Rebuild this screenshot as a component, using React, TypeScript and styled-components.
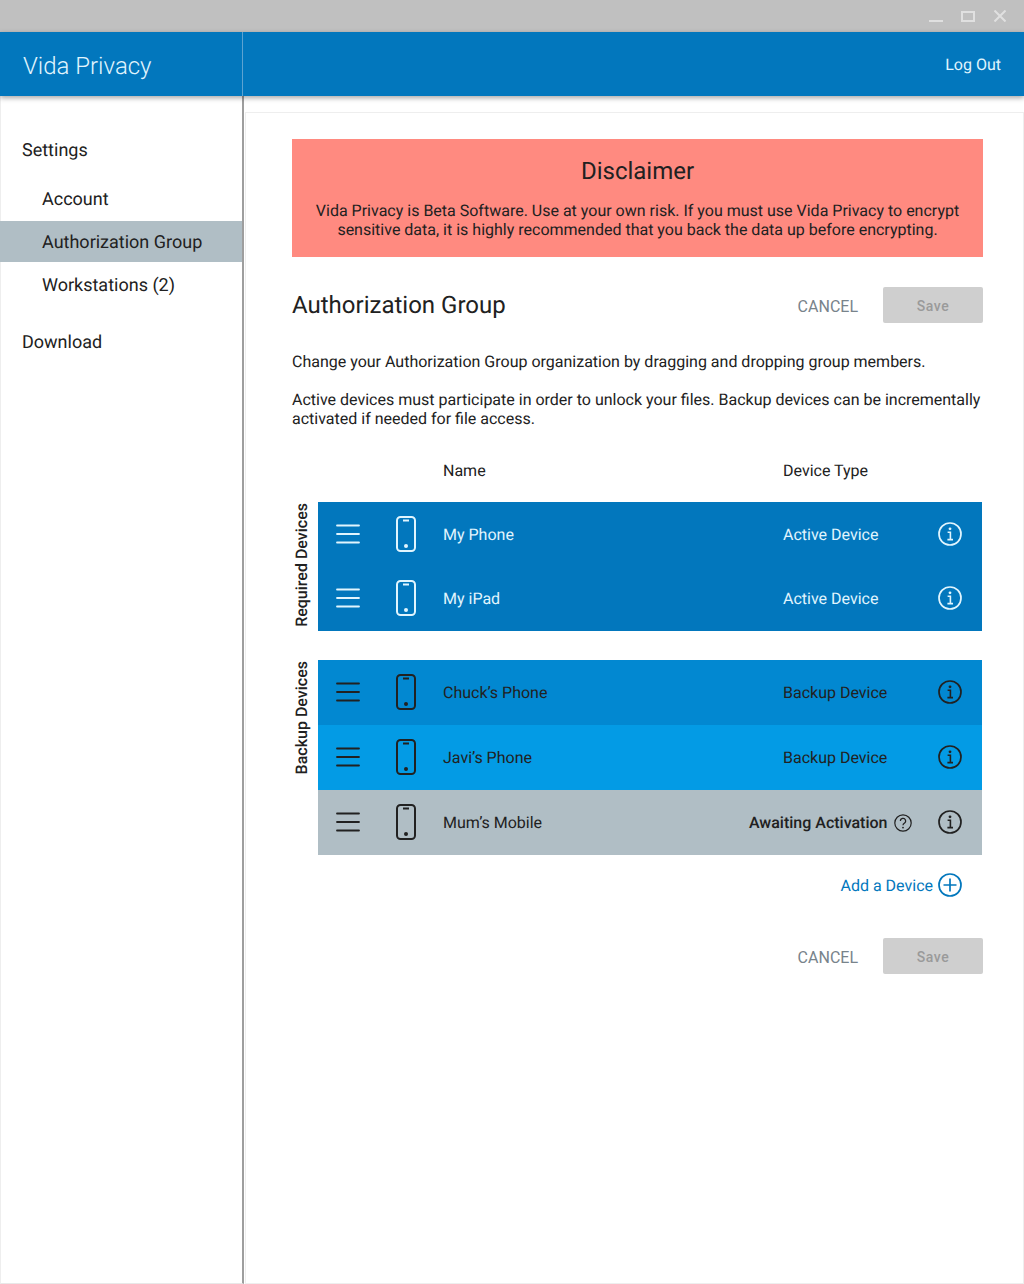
import React from 'react';
import styled, { createGlobalStyle } from 'styled-components';

const GlobalStyle = createGlobalStyle`
  html, body {
    margin: 0;
    padding: 0;
    background: #fff;
  }
  body {
    font-family: Roboto, "Liberation Sans", sans-serif;
    color: #212121;
    text-rendering: geometricPrecision;
  }
`;

type Tone = 'light' | 'dark';

const MenuIcon = () => (
  <svg width="24" height="20" viewBox="0 0 24 20" fill="none" stroke="currentColor" strokeWidth="1.8" strokeLinecap="round">
    <path d="M1 1.5h22M1 10h22M1 18.5h22" />
  </svg>
);

const PhoneIcon = () => (
  <svg width="22" height="38" viewBox="0 0 22 38" fill="none" stroke="currentColor">
    <rect x="2" y="2" width="18" height="34" rx="3.5" strokeWidth="2" />
    <path d="M8 5.5h6" strokeWidth="2" />
    <circle cx="11" cy="31" r="2" fill="currentColor" stroke="none" />
  </svg>
);

const InfoIcon = () => (
  <svg width="24" height="24" viewBox="0 0 24 24" fill="none" stroke="currentColor">
    <circle cx="12" cy="12" r="11" strokeWidth="1.7" />
    <circle cx="12" cy="6.8" r="1.4" fill="currentColor" stroke="none" />
    <path d="M9.6 10.3h2.8v7.2M9.4 17.6h5.6" strokeWidth="1.6" />
  </svg>
);

const HelpIcon = () => (
  <svg width="18" height="18" viewBox="0 0 18 18" fill="none" stroke="currentColor">
    <circle cx="9" cy="9" r="8.2" strokeWidth="1.2" />
    <path d="M6.4 7a2.6 2.6 0 1 1 3.9 2.2c-.9.5-1.3 1-1.3 2" strokeWidth="1.2" />
    <circle cx="9" cy="13.6" r=".9" fill="currentColor" stroke="none" />
  </svg>
);

const PlusIcon = () => (
  <svg width="24" height="24" viewBox="0 0 24 24" fill="none" stroke="currentColor">
    <circle cx="12" cy="12" r="11" strokeWidth="1.7" />
    <path d="M12 5.5v13M5.5 12h13" strokeWidth="1.7" />
  </svg>
);

const App = () => {
  return (
    <Page>
      <GlobalStyle />
      <TitleBar>
        <WinMin />
        <WinMax />
        <WinClose>
          <svg width="12" height="12" viewBox="0 0 12 12" stroke="currentColor" strokeWidth="2">
            <path d="M.5.5l11 11M11.5.5l-11 11" />
          </svg>
        </WinClose>
      </TitleBar>
      <Header>
        <Brand>Vida Privacy</Brand>
        <HeaderRight>
          <LogOut>Log Out</LogOut>
        </HeaderRight>
      </Header>
      <Body>
        <Sidebar>
          <NavHead>Settings</NavHead>
          <NavList>
            <NavItem>Account</NavItem>
            <NavItem $active>Authorization Group</NavItem>
            <NavItem>Workstations (2)</NavItem>
          </NavList>
          <NavDownload>Download</NavDownload>
        </Sidebar>
        <Main>
          <Card>
            <Disclaimer>
              <DisclaimerTitle>Disclaimer</DisclaimerTitle>
              <DisclaimerText>
                Vida Privacy is Beta Software. Use at your own risk. If you must use Vida Privacy to encrypt
                <br />
                sensitive data, it is highly recommended that you back the data up before encrypting.
              </DisclaimerText>
            </Disclaimer>
            <TitleRow>
              <Heading>Authorization Group</Heading>
              <Actions>
                <CancelButton>CANCEL</CancelButton>
                <SaveButton disabled>Save</SaveButton>
              </Actions>
            </TitleRow>
            <Copy>Change your Authorization Group organization by dragging and dropping group members.</Copy>
            <Copy $second>
              Active devices must participate in order to unlock your files. Backup devices can be incrementally
              activated if needed for file access.
            </Copy>
            <TableHead>
              <HeadName>Name</HeadName>
              <span>Device Type</span>
            </TableHead>
            <Group>
              <GroupLabel>Required Devices</GroupLabel>
              <Rows>
                <DeviceRow $bg="#0277bd" $tone="light" $height={64}>
                  <DeviceCells name="My Phone" type="Active Device" />
                </DeviceRow>
                <DeviceRow $bg="#0277bd" $tone="light" $height={65}>
                  <DeviceCells name="My iPad" type="Active Device" />
                </DeviceRow>
              </Rows>
            </Group>
            <BackupGroup>
              <GroupLabel>Backup Devices</GroupLabel>
              <Rows>
                <DeviceRow $bg="#0288d1" $tone="dark" $height={65}>
                  <DeviceCells name="Chuck’s Phone" type="Backup Device" />
                </DeviceRow>
                <DeviceRow $bg="#039be5" $tone="dark" $height={65}>
                  <DeviceCells name="Javi’s Phone" type="Backup Device" />
                </DeviceRow>
                <DeviceRow $bg="#b0bec5" $tone="dark" $height={65}>
                  <DeviceCells name="Mum’s Mobile" type="Awaiting Activation" awaiting />
                </DeviceRow>
              </Rows>
            </BackupGroup>
            <AddRow>
              Add a Device
              <PlusIcon />
            </AddRow>
            <BottomActions>
              <CancelButton>CANCEL</CancelButton>
              <SaveButton disabled>Save</SaveButton>
            </BottomActions>
          </Card>
        </Main>
      </Body>
    </Page>
  );
};

const DeviceCells = ({ name, type, awaiting }: { name: string; type: string; awaiting?: boolean }) => (
  <>
    <Handle>
      <MenuIcon />
    </Handle>
    <PhoneCell>
      <PhoneIcon />
    </PhoneCell>
    <NameCell>{name}</NameCell>
    {awaiting ? (
      <AwaitingCell>
        {type}
        <HelpIcon />
      </AwaitingCell>
    ) : (
      <TypeCell>{type}</TypeCell>
    )}
    <InfoCell>
      <InfoIcon />
    </InfoCell>
  </>
);

const Page = styled.div`
  width: 1024px;
  height: 1284px;
  display: flex;
  flex-direction: column;
  overflow: hidden;
`;
const TitleBar = styled.div`
  height: 32px;
  background: #c0c0c0;
  display: flex;
  align-items: center;
  justify-content: flex-end;
  color: #e0e0e0;
`;
const WinMin = styled.div`
  width: 14px;
  height: 2px;
  margin: 10px 18px 0 0;
  background: #e0e0e0;
`;
const WinMax = styled.div`
  width: 10px;
  height: 7px;
  border: 2px solid #e0e0e0;
  margin-right: 19px;
`;
const WinClose = styled.div`
  display: flex;
  margin-right: 18px;
`;
const Header = styled.header`
  height: 64px;
  display: flex;
  background: #0277bd;
  color: #fff;
  position: relative;
  z-index: 2;
  box-shadow: 0 2px 5px rgba(0, 0, 0, 0.35);
`;
const Brand = styled.div`
  width: 243px;
  box-sizing: border-box;
  padding: 4px 0 0 23px;
  display: flex;
  align-items: center;
  font-size: 24px;
  font-weight: 300;
  color: #e1f5fe;
  border-right: 1px solid #5da3d1;
`;
const HeaderRight = styled.div`
  flex: 1;
  display: flex;
  align-items: center;
  justify-content: flex-end;
  padding: 0 23px 0 0;
`;
const LogOut = styled.span`
  font-size: 16px;
  color: #e1f5fe;
`;
const Body = styled.div`
  flex: 1;
  display: flex;
  min-height: 0;
`;
const Sidebar = styled.nav`
  width: 244px;
  box-sizing: border-box;
  border-left: 1px solid #eee;
  border-right: 2px solid #9e9e9e;
  border-bottom: 1px solid #e8e8e8;
  font-size: 18px;
  padding-top: 43px;
`;
const NavHead = styled.div`
  height: 22px;
  line-height: 24px;
  padding-left: 21px;
`;
const NavList = styled.div`
  margin-top: 17px;
  display: flex;
  flex-direction: column;
  gap: 2px;
`;
const NavItem = styled.div<{ $active?: boolean }>`
  height: 41px;
  line-height: 43px;
  margin-left: -1px;
  padding-left: 42px;
  background: ${(p) => (p.$active ? '#b0bec5' : 'transparent')};
`;
const NavDownload = styled.div`
  margin-top: 26px;
  height: 22px;
  line-height: 24px;
  padding-left: 21px;
`;
const Main = styled.main`
  flex: 1;
  padding: 16px 0 0 1px;
  min-width: 0;
`;
const Card = styled.div`
  height: 100%;
  box-sizing: border-box;
  border: 1px solid #eee;
  padding: 26px 40px 0 46px;
`;
const Disclaimer = styled.section`
  height: 118px;
  box-sizing: border-box;
  padding-top: 17px;
  background: #ff8a80;
  text-align: center;
`;
const DisclaimerTitle = styled.h2`
  margin: 0;
  font-size: 24px;
  line-height: 30px;
  font-weight: 400;
`;
const DisclaimerText = styled.p`
  margin: 15px 0 0;
  font-size: 16px;
  line-height: 19px;
`;
const TitleRow = styled.div`
  height: 36px;
  margin-top: 30px;
  display: flex;
  align-items: center;
  justify-content: space-between;
`;
const Heading = styled.h1`
  margin: 0;
  font-size: 24px;
  font-weight: 400;
  line-height: 36px;
`;
const Actions = styled.div`
  display: flex;
  align-items: center;
  gap: 25px;
`;
const CancelButton = styled.button`
  border: 0;
  background: none;
  padding: 2px 0 0;
  font: 400 16px Roboto, sans-serif;
  color: #78838b;
`;
const SaveButton = styled.button`
  width: 100px;
  height: 36px;
  border: 0;
  border-radius: 2px;
  padding: 2px 0 0;
  background: #cfcfcf;
  color: #9a9a9a;
  font: 500 14px Roboto, sans-serif;
  letter-spacing: 0.5px;
`;
const Copy = styled.p<{ $second?: boolean }>`
  margin: ${(p) => (p.$second ? '19px' : '29px')} 0 0;
  font-size: 16px;
  line-height: 19px;
`;
const TableHead = styled.div`
  margin-top: 33px;
  height: 19px;
  line-height: 19px;
  font-size: 16px;
  display: flex;
`;
const HeadName = styled.span`
  margin-left: 151px;
  width: 340px;
`;
const Group = styled.div`
  margin-top: 22px;
  display: flex;
  margin-right: 1px;
  align-items: flex-start;
`;
const BackupGroup = styled(Group)`
  margin-top: 29px;
`;
const GroupLabel = styled.div`
  width: 22px;
  margin: 1px 4px 0 0;
  writing-mode: vertical-rl;
  transform: rotate(180deg);
  font-size: 16px;
  font-weight: 500;
  line-height: 20px;
`;
const Rows = styled.div`
  flex: 1;
`;
const DeviceRow = styled.div<{ $bg: string; $tone: Tone; $height: number }>`
  height: ${(p) => p.$height}px;
  background: ${(p) => p.$bg};
  color: ${(p) => (p.$tone === 'light' ? '#e1f5fe' : '#212121')};
  display: flex;
  align-items: center;
  font-size: 16px;
`;
const Handle = styled.div`
  width: 60px;
  height: 64px;
  align-self: flex-start;
  padding-left: 18px;
  box-sizing: border-box;
  display: flex;
  align-items: center;
`;
const PhoneCell = styled(Handle)`
  width: 65px;
  padding-left: 17px;
`;
const NameCell = styled.div`
  width: 340px;
`;
const TypeCell = styled.div`
  flex: 1;
`;
const AwaitingCell = styled.div`
  flex: 1;
  margin-left: -34px;
  font-weight: 500;
  display: flex;
  align-items: center;
  gap: 6px;
  white-space: nowrap;
`;
const InfoCell = styled.div`
  width: 44px;
  height: 64px;
  align-self: flex-start;
  display: flex;
  align-items: center;
`;
const AddRow = styled.div`
  margin-top: 18px;
  display: flex;
  align-items: center;
  justify-content: flex-end;
  gap: 5px;
  padding-right: 21px;
  font-size: 16px;
  color: #0277bd;
`;
const BottomActions = styled(Actions)`
  margin-top: 41px;
  justify-content: flex-end;
`;

export default App;
